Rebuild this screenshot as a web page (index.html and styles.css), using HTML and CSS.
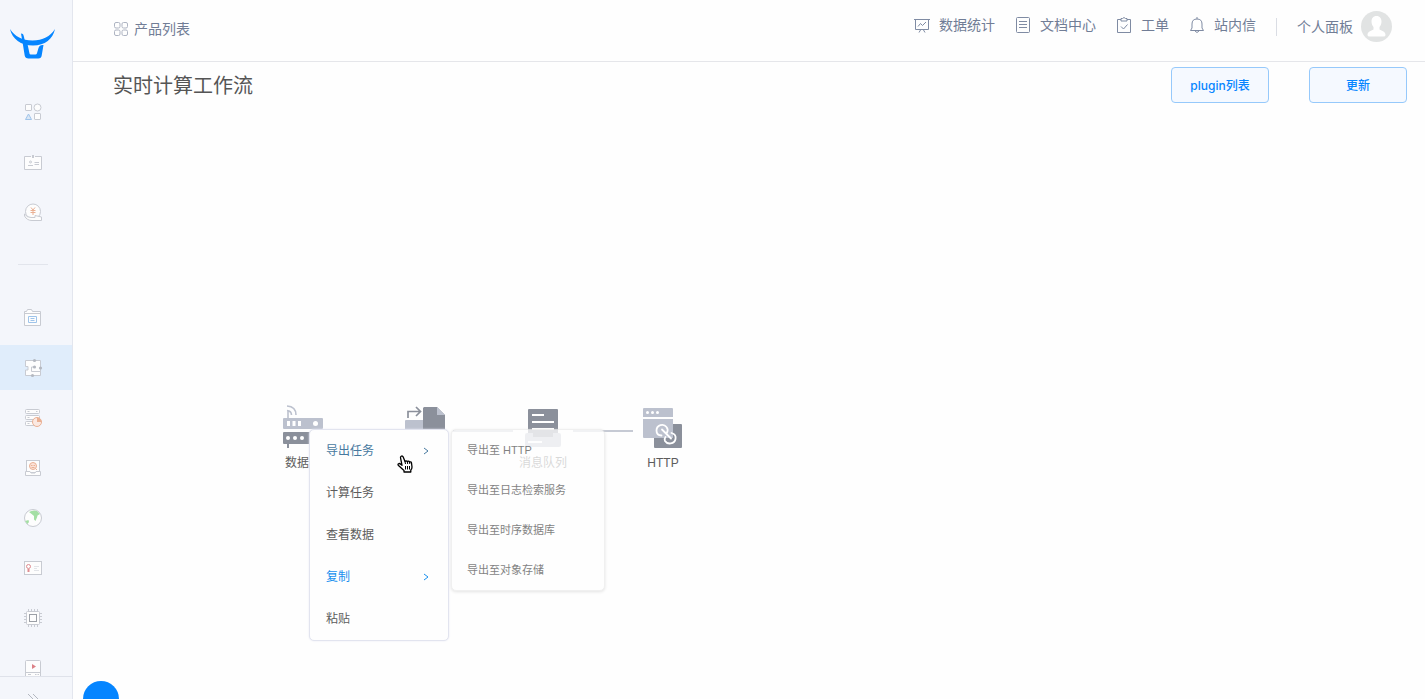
FILE: index.html
```html
<!DOCTYPE html>
<html lang="zh-CN">
<head>
<meta charset="utf-8">
<title>实时计算工作流</title>
<link rel="stylesheet" href="styles.css">
</head>
<body>
<div class="app">
  <aside class="sidebar">
    <a class="logo" href="#" aria-label="首页">
      <svg width="46" height="32" viewBox="0 0 46 32" fill="#0585ff">
        <path d="M0 1C5 8.500 12 12.500 22.500 12.500S40 8.500 45 1C43 11 35 17.500 23 17.500S2 11 0 1Z"/>
        <path d="M11 5.500C13 5.500 13.500 6.500 14 9L15.500 16H17.500L19.500 25.500Q19.700 26.500 20.700 26.500H25.500Q26.500 26.500 26.900 25.500L28.500 20Q29.500 16.500 33.500 17L31.700 27.500Q31.300 30.500 28.300 30.500H18.500Q15.200 30.500 14.700 27.500L12.500 14Z"/>
      </svg>
    </a>
    <nav class="side-nav">
      <a class="side-item" href="#" aria-label="全部产品"><svg class="side-icon" viewBox="0 0 20 20"><rect x="2.500" y="1.500" width="6" height="6" rx=".5"/><circle cx="14.500" cy="4.500" r="3.500"/><path class="blue" fill="#dbe7f4" d="M5.500 11L8.500 16.500H2.500Z"/><rect x="11.500" y="10.500" width="6" height="6" rx=".5"/></svg></a>
      <a class="side-item" href="#" aria-label="账号"><svg class="side-icon" viewBox="0 0 20 20"><path d="M8 3.500H1.500V16.500H18.500V3.500H12"/><path stroke-width="2" d="M10 2V5"/><path d="M5 12.500H10M11.500 9.500H16M11.500 11.500H16"/><circle cx="7.500" cy="9" r="1"/></svg></a>
      <a class="side-item" href="#" aria-label="费用"><svg class="side-icon" viewBox="0 0 20 20"><circle cx="10" cy="8.500" r="7.500"/><path d="M1.500 11V13Q4 17.500 9 17.500H18.500V14L12 12.500V14.500H8Q4 14.500 1.500 11Z"/><path class="orange" fill="none" d="M8 4.500L10 7L12 4.500M7.500 7.500H12.500M7.500 9.500H12.500M10 7V12"/></svg></a>
      <hr class="side-divider">
      <a class="side-item" href="#" aria-label="存储"><svg class="side-icon" viewBox="0 0 20 20"><path d="M1.500 17.500V3.500H3.500L4.500 1.500H8.500L9.500 3.500H17.500V17.500Z"/><path d="M1.500 5.500H17.500"/><path class="blue" d="M5.500 8.500H13.500V14.500H5.500ZM7.500 10.500H11.500M7.500 12.500H11.500"/></svg></a>
      <a class="side-item active" href="#" aria-label="工作流"><svg class="side-icon" viewBox="0 0 20 20"><path d="M2.500 2.500H17.500V17.500H2.500V12H5V8.500H2.500Z"/><path d="M11 9H8.500V13.500H17.500"/><g fill="#b4b8c0" stroke="none"><circle cx="11.500" cy="2.500" r="1.600"/><circle cx="11.500" cy="9" r="1.600"/><circle cx="17.500" cy="10" r="1.600"/><circle cx="9.500" cy="17.500" r="1.600"/></g></svg></a>
      <a class="side-item" href="#" aria-label="日志"><svg class="side-icon" viewBox="0 0 20 20"><rect x="2.500" y="1.500" width="14" height="4" rx="1"/><rect x="2.500" y="7.500" width="14" height="4" rx="1"/><rect x="2.500" y="13.500" width="14" height="4" rx="1"/><path d="M4.500 3.500H6.500M4.500 9.500H6.500M4.500 15.500H6.500M13 3.500H14.500"/><circle class="orange" fill="#fbe9e2" cx="14" cy="14" r="4.500"/><path fill="#eab093" stroke="none" d="M14 9.500V14H18.500Q18 10 14 9.500Z"/></svg></a>
      <a class="side-item" href="#" aria-label="智能"><svg class="side-icon" viewBox="0 0 20 20"><rect x="3.500" y="2.500" width="13" height="12"/><path d="M2.500 13.500H7L8 15H12L13 13.500H17.500V17.500H2.500Z"/><circle class="orange" fill="#fbe3d9" cx="10" cy="8" r="3.500"/><path class="orange" d="M8 7.500H9.500M10.500 7.500H12M8.500 9.500H11.500M12.500 10.500L14 12"/></svg></a>
      <a class="side-item" href="#" aria-label="网络"><svg class="side-icon" viewBox="0 0 20 20"><circle cx="10" cy="10" r="8.500"/><path fill="#a4dfa4" stroke="none" d="M6 4Q10 1.500 14 3L17 6L14.500 7.500L14 9.500L12.500 13L11 11.500V8L8 5.500ZM2 13L5.500 12L6 14L4.500 16Z"/></svg></a>
      <a class="side-item" href="#" aria-label="证书"><svg class="side-icon" viewBox="0 0 20 20"><rect x="1.500" y="3.500" width="17" height="13"/><path stroke="#e2e4e8" d="M11 8.500H16M11 10.500H14M11 12.500H16"/><circle class="red" cx="5.500" cy="8.500" r="2"/><path class="red" stroke-width="2" d="M5.500 11V14"/></svg></a>
      <a class="side-item" href="#" aria-label="计算"><svg class="side-icon" viewBox="0 0 20 20"><path d="M5.500 1V19M8.500 1V19M11.500 1V19M14.500 1V19M1 5.500H19M1 8.500H19M1 11.500H19M1 14.500H19"/><rect x="3.500" y="3.500" width="13" height="13" rx="1"/><rect stroke="#9b9fa6" x="6.500" y="6.500" width="7" height="7"/></svg></a>
      <a class="side-item" href="#" aria-label="视频"><svg class="side-icon" viewBox="0 0 20 20"><path d="M2.500 21V3.500Q2.500 2.500 3.500 2.500H16.500Q17.500 2.500 17.500 3.500V21M2.500 14.500H17.500M5 16.500H8M12 16.500H13.500M14.500 16.500H16"/><path fill="#dc8187" stroke="none" d="M9 6L13 8.500L9 11Z"/></svg></a>
    </nav>
    <button class="expand" type="button" aria-label="展开">
      <svg width="12" height="14" viewBox="0 0 12 14" fill="none" stroke="#b4b8c0"><path d="M1 2L6 7L1 12M6 2L11 7L6 12"/></svg>
    </button>
  </aside>
  <div class="main">
    <header class="topbar">
      <a class="products" href="#">
        <svg width="14" height="14" viewBox="0 0 14 14" fill="none" stroke="#aeb4c2"><rect x=".5" y=".5" width="5.500" height="5.500" rx="1.500"/><rect x="8" y=".5" width="5.500" height="5.500" rx="1.500"/><rect x=".5" y="8" width="5.500" height="5.500" rx="1.500"/><rect x="8" y="8" width="5.500" height="5.500" rx="1.500"/></svg>
        <span>产品列表</span>
      </a>
      <div class="top-right">
        <a class="top-link" href="#"><svg class="top-icon" viewBox="0 0 16 18"><path d="M0 3.500H16M1.500 3.500V13.500H14.500V3.500M4 10.500L6.500 7.500L8.500 9.500L12 6M6.500 14L5 16.500M9.500 14L11 16.500"/></svg><span>数据统计</span></a>
        <a class="top-link" href="#"><svg class="top-icon" viewBox="0 0 16 18"><rect x="1.500" y="1.500" width="13" height="15" rx="1"/><path d="M4 5.500H12M4 8.500H12M4 11.500H12"/></svg><span>文档中心</span></a>
        <a class="top-link" href="#"><svg class="top-icon" viewBox="0 0 16 18"><path d="M5 3.500H1.500V16.500H14.500V3.500H11M5 5V2.500H6.500Q8 .5 9.500 2.500H11V5ZM5 10.500L7.500 13L11.500 8.500"/></svg><span>工单</span></a>
        <a class="top-link" href="#"><svg class="top-icon" viewBox="0 0 16 18"><path d="M1.500 14.500L3 12V8Q3 3 8 3T13 8V12L14.500 14.500ZM8 1V3M6 15Q8 18 10 15"/></svg><span>站内信</span></a>
        <span class="top-divider"></span>
        <a class="user" href="#"><span>个人面板</span>
          <svg width="31" height="31" viewBox="0 0 31 31"><circle cx="15.500" cy="15.500" r="15.500" fill="#e1e3e3"/><path fill="#fff" d="M15.500 5C19 5 20.500 7.500 20.500 10.500C20.500 13 19.500 15 18.500 16V18.500C21 20 24.500 20.500 24.500 24Q24.500 25.500 22.500 25.500H8.500Q6.500 25.500 6.500 24C6.500 20.500 10 20 12.500 18.500V16C11.500 15 10.500 13 10.500 10.500C10.500 7.500 12 5 15.500 5Z"/></svg>
        </a>
      </div>
    </header>
    <div class="titlebar">
      <h1 class="title">实时计算工作流</h1>
      <div class="actions">
        <button class="action" type="button">plugin列表</button>
        <button class="action" type="button">更新</button>
      </div>
    </div>
    <main class="canvas">
      <div class="flow">
        <div class="node">
          <svg class="node-icon" viewBox="273 400 60 50"><rect x="283" y="418" width="40" height="11" rx="1" fill="#bcc1ce"/><path fill="#fff" d="M287 421H290V426H287ZM292.500 421H295.500V426H292.500ZM298 421H301V426H298Z"/><circle cx="315.500" cy="423.500" r="2.500" fill="#fff"/><path fill="none" stroke="#bcc1ce" stroke-width="1.600" d="M288 418V411.500M287 410.500Q291.500 411 291.500 415M287 406Q296 406.500 296 415"/><rect x="283" y="432" width="40" height="12" rx="1" fill="#8b909b"/><path fill="#8b909b" d="M287 444H289V448H287Z"/><g fill="#fff"><circle cx="288" cy="438" r="2"/><circle cx="295" cy="438" r="2"/><circle cx="302" cy="438" r="2"/></g></svg>
          <span class="node-name">数据源</span>
        </div>
        <span class="link"></span>
        <div class="node">
          <svg class="node-icon" viewBox="393 400 60 50"><path fill="#bcc1ce" d="M406 420H423V446H406Q405 446 405 445V421Q405 420 406 420Z"/><path fill="#8b909b" d="M424 407H437L445 415V440H423V408Z"/><path fill="#bcc1ce" d="M437 407L445 415H437Z"/><path fill="none" stroke="#8b909b" stroke-width="1.700" d="M408 418V411.500H420M416 407L420.500 411.500L416 416"/></svg>
        </div>
        <span class="link"></span>
        <div class="node">
          <svg class="node-icon" viewBox="513 400 60 50"><rect x="525" y="433" width="36" height="14" rx="2" fill="#bcc1ce"/><path fill="#8b909b" d="M529 409H557Q558 409 558 410V433H553V437H533V433H528V410Q528 409 529 409Z"/><path stroke="#fff" stroke-width="2" d="M532 415H544M532 422H554M532 429H554M528 442H542"/></svg>
          <span class="node-name">消息队列</span>
        </div>
        <span class="link"></span>
        <div class="node">
          <svg class="node-icon" viewBox="633 400 60 50"><rect x="654" y="424" width="28" height="24" rx="1" fill="#8b909b"/><path fill="#bcc1ce" d="M644 408H672Q673 408 673 409V417H643V409Q643 408 644 408ZM643 419H673V438H644Q643 438 643 437Z"/><g fill="#fff"><circle cx="647.500" cy="412.500" r="1.500"/><circle cx="652.500" cy="412.500" r="1.500"/><circle cx="657.500" cy="412.500" r="1.500"/></g><path fill="none" stroke="#fff" stroke-width="1.800" stroke-linecap="round" d="M661.500 435.500C658 435.500 656.500 433 656.500 430.500C656.500 425 663.500 423 666.500 427Q668.500 429.500 667 432.500M671.500 433C675 434 676 436.500 675.500 439C674.500 444 667.500 445 665 441Q664 439 665.500 437M662 429.500L671 438.500"/></svg>
          <span class="node-name">HTTP</span>
        </div>
      </div>
      <div class="submenu" role="menu">
        <button class="submenu-item" role="menuitem" type="button">导出至 HTTP</button>
        <button class="submenu-item" role="menuitem" type="button">导出至日志检索服务</button>
        <button class="submenu-item" role="menuitem" type="button">导出至时序数据库</button>
        <button class="submenu-item" role="menuitem" type="button">导出至对象存储</button>
      </div>
      <div class="menu" role="menu">
        <button class="menu-item hover" role="menuitem" type="button">导出任务<svg class="chevron" viewBox="0 0 6 8"><path d="M1 1L5 4L1 7"/></svg></button>
        <button class="menu-item" role="menuitem" type="button">计算任务</button>
        <button class="menu-item" role="menuitem" type="button">查看数据</button>
        <button class="menu-item current" role="menuitem" type="button">复制<svg class="chevron" viewBox="0 0 6 8"><path d="M1 1L5 4L1 7"/></svg></button>
        <button class="menu-item" role="menuitem" type="button">粘贴</button>
      </div>
      <svg class="pointer" viewBox="0 0 16 18"><path fill="#fff" stroke="#000" stroke-width="1.300" stroke-linejoin="round" d="M4.200 1.200Q5.500.5 6.200 2L8 6.500Q9.200 5.300 10.300 6.600Q11.500 5.600 12.500 7Q14 6.300 14.500 8L15 12Q15 14 13.800 15V17H7V15.500L1.500 10.500Q.5 9.300 1.500 8.700Q2.500 8 4 9.500L5 10.300L3.500 2.700Q3.300 1.700 4.200 1.200Z"/><path stroke="#000" d="M8.500 11V14.500M10.500 11V14.500M12.500 11V14.500M8 6.500L8.500 9M10.300 6.600L10.700 9M12.500 7L12.800 9"/></svg>
    </main>
  </div>
</div>
<button class="help" type="button" aria-label="帮助"></button>
</body>
</html>
```
FILE: styles.css
```css
* { box-sizing: border-box; }

body {
  margin: 0;
  overflow: hidden;
  background: #fefefe;
  font-family: "Liberation Sans", "Noto Sans CJK SC", sans-serif;
  font-size: 12px;
  color: #5c5c5c;
}

a { color: inherit; text-decoration: none; }

button {
  padding: 0;
  border: 0;
  background: none;
  color: inherit;
  font: inherit;
  cursor: pointer;
}

svg { display: block; flex: none; }

.app { display: flex; height: 100vh; }

.sidebar {
  display: flex;
  flex-direction: column;
  flex: none;
  width: 73px;
  border-right: 1px solid #e3e6ee;
  background: #f4f6fb;
}

.logo { flex: none; height: 90px; padding: 28px 0 0 10px; }

.side-nav {
  display: flex;
  flex: 1;
  flex-direction: column;
  gap: 5px;
  min-height: 0;
  overflow: hidden;
}

.side-item {
  display: flex;
  flex: none;
  align-items: center;
  justify-content: center;
  height: 45px;
  padding-right: 6px;
}

.side-item.active { background: #e0edfb; }

.side-icon {
  width: 20px;
  height: 20px;
  overflow: visible;
  fill: #fdfdfd;
  stroke: #c8cbd2;
}

.blue { stroke: #9fc4ea; }
.orange { stroke: #eab093; }
.red { stroke: #de8c90; }

.side-divider {
  flex: none;
  width: 30px;
  height: 1px;
  margin: 24px 0 25px 18px;
  border: 0;
  background: #e2e5ec;
}

.expand {
  flex: none;
  height: 23px;
  padding: 15px 0 0 27px;
  overflow: hidden;
  border-top: 1px solid #dfe2ea;
}

.main { display: flex; flex: 1; flex-direction: column; min-width: 0; }

.topbar {
  display: flex;
  align-items: center;
  justify-content: space-between;
  height: 62px;
  padding: 0 33px 0 41px;
  border-bottom: 1px solid #e5e6ea;
  color: #717d96;
  font-size: 14px;
  line-height: 20px;
}

.products { display: flex; align-items: center; gap: 6px; padding-bottom: 3px; }

.top-right { display: flex; align-items: center; gap: 20px; padding-bottom: 8px; }

.top-link { display: flex; align-items: center; gap: 9px; padding-bottom: 3px; }

.top-icon { width: 16px; height: 18px; fill: none; stroke: #7f8ba3; }

.top-divider { width: 1px; height: 18px; background: #dadde4; }

.user { display: flex; align-items: center; gap: 8px; }

.titlebar {
  display: flex;
  align-items: center;
  justify-content: space-between;
  padding: 5px 18px 0 40px;
}

.title {
  margin: 0;
  padding-top: 2px;
  color: #555;
  font-size: 20px;
  font-weight: 400;
  line-height: 30px;
}

.actions { display: flex; gap: 40px; }

.action {
  width: 98px;
  height: 36px;
  padding-bottom: 2px;
  border: 1px solid #96c9fb;
  border-radius: 4px;
  background: #f5f9ff;
  color: #0585ff;
  font-family: Inter, "Noto Sans CJK SC", sans-serif;
  font-weight: 500;
}

.canvas { position: relative; flex: 1; min-height: 0; }

.flow {
  position: absolute;
  top: 297px;
  left: 200px;
  display: flex;
}

.node {
  display: flex;
  flex-direction: column;
  align-items: center;
  gap: 4px;
  width: 60px;
  line-height: 18px;
}

.node-icon { width: 60px; height: 50px; }

.link { width: 60px; height: 2px; margin-top: 30px; background: #c6cad4; }

.menu,
.submenu {
  position: absolute;
  top: 326px;
  display: flex;
  flex-direction: column;
  border-radius: 5px;
  background: #fefefe;
}

.menu {
  left: 236px;
  width: 140px;
  border: 1px solid #e2e4ef;
  box-shadow: 0 0 2px #e6e8f2;
}

.menu-item {
  display: flex;
  align-items: center;
  justify-content: space-between;
  height: 42px;
  padding: 0 19px 3px 16px;
  text-align: left;
}

.menu-item.hover { color: #47799f; }
.menu-item.current { color: #1890ee; }

.chevron { width: 6px; height: 8px; margin-top: 2px; fill: none; stroke: currentColor; }

.submenu {
  left: 378px;
  width: 154px;
  border: 1px solid #ececec;
  box-shadow: 0 1px 3px #ddd;
  opacity: .77;
}

.submenu-item {
  height: 40px;
  padding: 0 15px 2px;
  font-size: 11px;
  text-align: left;
}

.pointer { position: absolute; top: 352px; left: 324px; width: 16px; height: 18px; }

.help {
  position: fixed;
  bottom: -18px;
  left: 83px;
  width: 36px;
  height: 36px;
  border-radius: 50%;
  background: #0585ff;
}
```
